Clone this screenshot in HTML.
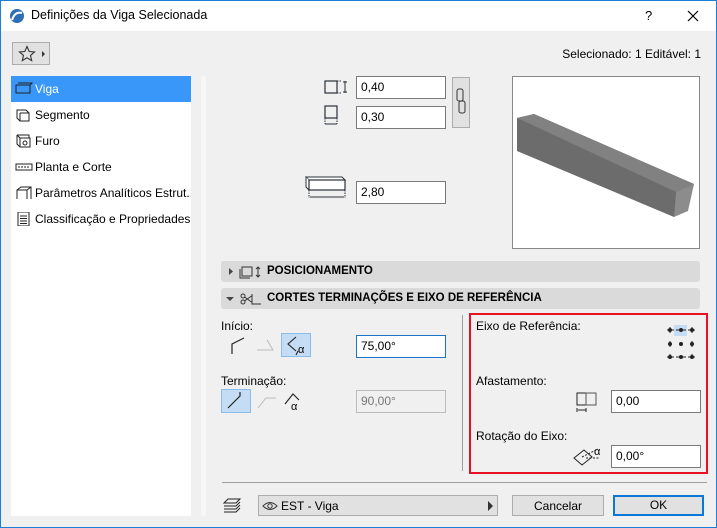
<!DOCTYPE html>
<html><head><meta charset="utf-8">
<style>
*{margin:0;padding:0;box-sizing:border-box}
body{width:717px;height:528px;overflow:hidden;background:#f0f0f0;font-family:"Liberation Sans",sans-serif;font-size:12px;color:#000;position:relative}
.a{position:absolute;white-space:nowrap}
.win{left:0;top:0;width:717px;height:528px;border:1px solid #1c7fd6}
.title{left:1px;top:1px;width:715px;height:30px;background:#fff}
.inp{position:absolute;background:#fff;border:1px solid #7a7a7a;height:23px;padding-left:4px;line-height:21px}
.row{position:absolute;left:11px;width:180px;height:26px;line-height:26px;padding-left:24px;white-space:nowrap;overflow:hidden}
.row svg{position:absolute;left:4px;top:6px}
.bar{position:absolute;left:221px;width:479px;height:21px;background:#dadada;border-radius:3px;font-weight:bold;line-height:21px;padding-left:46px;font-size:11.5px;white-space:nowrap}
.btn{position:absolute;background:#e1e1e1;border:1px solid #adadad;text-align:center;line-height:20px}
</style></head><body>
<div class="a win"></div>
<div class="a title"></div>
<svg class="a" style="left:9px;top:8px" width="16" height="16" viewBox="0 0 16 16"><circle cx="8" cy="8" r="7" fill="#2f6fb8"/><path d="M3 12 Q6 3 13 5" stroke="#fff" stroke-width="2" fill="none"/></svg>
<div class="a" style="left:31px;top:8px;font-size:12.5px">Definições da Viga Selecionada</div>
<div class="a" style="left:645px;top:8px;font-size:13px">?</div>
<svg class="a" style="left:687px;top:10px" width="12" height="12"><path d="M1 1L11 11M11 1L1 11" stroke="#000" stroke-width="1.2"/></svg>

<div class="btn" style="left:12px;top:42px;width:38px;height:23px"></div>
<svg class="a" style="left:18px;top:45px" width="30" height="18"><path d="M9 1.5l2.2 5 5.3.4-4 3.5 1.2 5.2L9 12.8 4.3 15.6l1.2-5.2-4-3.5 5.3-.4z" fill="none" stroke="#333" stroke-width="1.1"/><path d="M24 6l3 3-3 3z" fill="#333"/></svg>
<div class="a" style="right:16px;top:47px">Selecionado: 1 Editável: 1</div>

<div class="a" style="left:11px;top:76px;width:180px;height:440px;background:#fff"></div>
<div class="a" style="left:201px;top:76px;width:5px;height:440px;background:#f7f7f7"></div>
<div class="row" style="top:76px;background:#3897f8;color:#fff"><svg width="18" height="14"><rect x="1" y="3" width="14" height="8" fill="none" stroke="#222"/><path d="M3 1h14l-2 2" fill="none" stroke="#222"/></svg>Viga</div>
<div class="row" style="top:102px"><svg width="18" height="14"><path d="M2 2h9l3 3v8H5l-3-3z M5 5h9 M5 5v8" fill="none" stroke="#222"/></svg>Segmento</div>
<div class="row" style="top:128px"><svg width="18" height="14"><path d="M2 1h12v3 M2 1v9l3 3h10V4H5v9 M2 1l3 3" fill="none" stroke="#222"/><circle cx="10" cy="9" r="2" fill="none" stroke="#222"/></svg>Furo</div>
<div class="row" style="top:154px"><svg width="18" height="14"><rect x="1" y="4" width="16" height="6" fill="none" stroke="#222"/><path d="M3 7h12" stroke="#222" stroke-dasharray="2 1"/></svg>Planta e Corte</div>
<div class="row" style="top:180px"><svg width="18" height="14"><path d="M2 13V4l4-3h10v12 M2 4h10v9 M12 4l4-3" fill="none" stroke="#222"/></svg>Parâmetros Analíticos Estrut...</div>
<div class="row" style="top:206px"><svg width="18" height="14"><rect x="3" y="0" width="11" height="14" fill="none" stroke="#222"/><path d="M5 4h7M5 6.5h7M5 9h7M5 11.5h7" stroke="#222"/></svg>Classificação e Propriedades</div>

<svg class="a" style="left:322px;top:78px" width="30" height="52"><rect x="3" y="3" width="12" height="12" fill="none" stroke="#2a3038" stroke-width="1.2"/><path d="M15 3h4M15 15h4" stroke="#2a3038" stroke-dasharray="1.5 1"/><path d="M23 3v12M21 4h4M21 14h4" stroke="#2a3038"/><rect x="3" y="28" width="12" height="12" fill="none" stroke="#2a3038" stroke-width="1.2"/><path d="M3 40v6M15 40v6" stroke="#2a3038" stroke-dasharray="1.5 1"/><path d="M3 46h12" stroke="#2a3038"/></svg>
<div class="inp" style="left:356px;top:76px;width:90px">0,40</div>
<div class="inp" style="left:356px;top:106px;width:90px">0,30</div>
<div class="a" style="left:452px;top:77px;width:18px;height:51px;background:#e1e1e1;border:1px solid #adadad"></div>
<svg class="a" style="left:455px;top:88px" width="12" height="28"><rect x="2" y="1" width="6" height="12" rx="2" fill="none" stroke="#333"/><rect x="4" y="13" width="6" height="12" rx="2" fill="none" stroke="#333"/></svg>
<svg class="a" style="left:304px;top:175px" width="48" height="32"><path d="M2 2h36l3 3H5z" fill="#fff" stroke="#2a3038"/><path d="M2 2v10l3 3V5" fill="#fff" stroke="#2a3038"/><rect x="5" y="5" width="36" height="10" fill="#fff" stroke="#2a3038" stroke-width="1.2"/><path d="M5 15v8M41 15v8" stroke="#2a3038" stroke-dasharray="1.5 1"/><path d="M6 22h34" stroke="#2a3038"/></svg>
<div class="inp" style="left:356px;top:181px;width:90px">2,80</div>

<div class="a" style="left:512px;top:76px;width:188px;height:173px;background:#fff;border:1px solid #888"></div>
<svg class="a" style="left:513px;top:77px" width="186" height="171"><polygon points="4,41 21,37 181,107 161,140" fill="#6e6e6e"/><polygon points="4,41 21,37 181,107 163,115" fill="#818181"/><polygon points="163,115 181,107 175,134 161,140" fill="#8c8c8c"/><polygon points="4,41 163,115 161,140 4,74" fill="#6c6c6c"/></svg>

<div class="bar" style="top:261px">POSICIONAMENTO</div>
<svg class="a" style="left:229px;top:266px" width="34" height="14"><path d="M0 2l4 3.5L0 9z" fill="#444"/><rect x="13" y="1" width="10" height="9" fill="none" stroke="#333"/><path d="M11 3v9h10" fill="none" stroke="#333"/><path d="M29 1v10M27 3l2-2 2 2M27 9l2 2 2-2" fill="none" stroke="#333"/></svg>
<div class="bar" style="top:288px">CORTES TERMINAÇÕES E EIXO DE REFERÊNCIA</div>
<svg class="a" style="left:226px;top:292px" width="36" height="14"><path d="M0 5h8l-4 4z" fill="#444"/><circle cx="17" cy="4" r="2" fill="none" stroke="#333"/><circle cx="17" cy="10" r="2" fill="none" stroke="#333"/><path d="M18.5 5l7 5M18.5 9l7-5M26 2v10h9" fill="none" stroke="#333"/></svg>

<div class="a" style="left:221px;top:319px">Início:</div>
<svg class="a" style="left:228px;top:336px" width="22" height="20"><path d="M4 18V8l12-6" fill="none" stroke="#222" stroke-width="1.2"/></svg>
<svg class="a" style="left:255px;top:336px" width="22" height="20"><path d="M2 14h16l-6-10" fill="none" stroke="#bbb"/></svg>
<div class="a" style="left:281px;top:333px;width:30px;height:24px;background:#c4ddf5;border:1px solid #8cbde9"></div>
<svg class="a" style="left:284px;top:335px" width="26" height="22"><path d="M12 2L4 9l8 7 M14 16l-2 4" fill="none" stroke="#222" stroke-width="1.1"/><text x="14" y="18" font-size="11" font-family="Liberation Sans">α</text></svg>
<div class="inp" style="left:356px;top:335px;width:90px;border-color:#1a73c9">75,00°</div>

<div class="a" style="left:221px;top:374px">Terminação:</div>
<div class="a" style="left:221px;top:389px;width:30px;height:24px;background:#c4ddf5;border:1px solid #8cbde9"></div>
<svg class="a" style="left:224px;top:390px" width="24" height="22"><path d="M4 18L16 6V2" fill="none" stroke="#222" stroke-width="1.2"/></svg>
<svg class="a" style="left:255px;top:390px" width="24" height="22"><path d="M3 18L11 8h10" fill="none" stroke="#bbb"/></svg>
<svg class="a" style="left:283px;top:390px" width="26" height="22"><path d="M2 14L10 4l6 6" fill="none" stroke="#222" stroke-width="1.1"/><text x="8" y="20" font-size="11" font-family="Liberation Sans">α</text></svg>
<div class="inp" style="left:356px;top:390px;width:90px;background:#f0f0f0;border-color:#bcbcbc;color:#777">90,00°</div>

<div class="a" style="left:462px;top:315px;width:1px;height:156px;background:#a0a0a0"></div>
<div class="a" style="left:469px;top:313px;width:239px;height:161px;border:2px solid #e81123"></div>
<div class="a" style="left:476px;top:319px">Eixo de Referência:</div>
<div class="a" style="left:674px;top:325px;width:13px;height:11px;background:#c4ddf5"></div>
<svg class="a" style="left:665px;top:324px" width="32" height="36"><g fill="#222" stroke="#222"><path d="M2 6h7M11 6h10M23 6h7M2 33h7M11 33h10M23 33h7M5 3v6M5 17v6M5 30v3M27 3v6M27 17v6M27 30v3" fill="none"/><circle cx="5" cy="6" r="1.5"/><circle cx="16" cy="6" r="1.5"/><circle cx="27" cy="6" r="1.5"/><circle cx="5" cy="20" r="1.5"/><circle cx="16" cy="20" r="1.5"/><circle cx="27" cy="20" r="1.5"/><circle cx="5" cy="33" r="1.5"/><circle cx="16" cy="33" r="1.5"/><circle cx="27" cy="33" r="1.5"/></g></svg>
<div class="a" style="left:476px;top:374px">Afastamento:</div>
<svg class="a" style="left:576px;top:391px" width="26" height="22"><rect x="1" y="2" width="9" height="12" fill="none" stroke="#222"/><rect x="10" y="2" width="10" height="12" fill="none" stroke="#555"/><path d="M2 19h8M1 17v4M10 17v4" stroke="#222"/></svg>
<div class="inp" style="left:611px;top:390px;width:90px">0,00</div>
<div class="a" style="left:476px;top:429px">Rotação do Eixo:</div>
<svg class="a" style="left:572px;top:444px" width="34" height="24"><path d="M2 14l10-8 8 7-10 8z" fill="none" stroke="#222"/><path d="M10 13l16-8M14 14h14" stroke="#222" stroke-dasharray="2 1.5"/><text x="22" y="11" font-size="11" font-family="Liberation Sans">α</text></svg>
<div class="inp" style="left:611px;top:445px;width:90px">0,00°</div>

<div class="a" style="left:222px;top:482px;width:485px;height:1px;background:#a0a0a0"></div>
<svg class="a" style="left:222px;top:495px" width="20" height="20"><path d="M2 8l4-4h12l-4 4z M2 11h12l4-4 M2 14h12l4-4 M2 17h12l4-4" fill="none" stroke="#222"/></svg>
<div class="btn" style="left:258px;top:495px;width:240px;height:21px;text-align:left;padding-left:22px">EST - Viga</div>
<svg class="a" style="left:262px;top:500px" width="16" height="12"><path d="M1 6Q8-1 15 6Q8 13 1 6z" fill="none" stroke="#333"/><circle cx="8" cy="6" r="2.2" fill="none" stroke="#333"/></svg>
<svg class="a" style="left:488px;top:501px" width="6" height="10"><path d="M0 0l5 5-5 5z" fill="#333"/></svg>
<div class="btn" style="left:512px;top:495px;width:92px;height:21px">Cancelar</div>
<div class="btn" style="left:613px;top:495px;width:91px;height:21px;border:2px solid #0a78d7;line-height:17px">OK</div>
</body></html>
